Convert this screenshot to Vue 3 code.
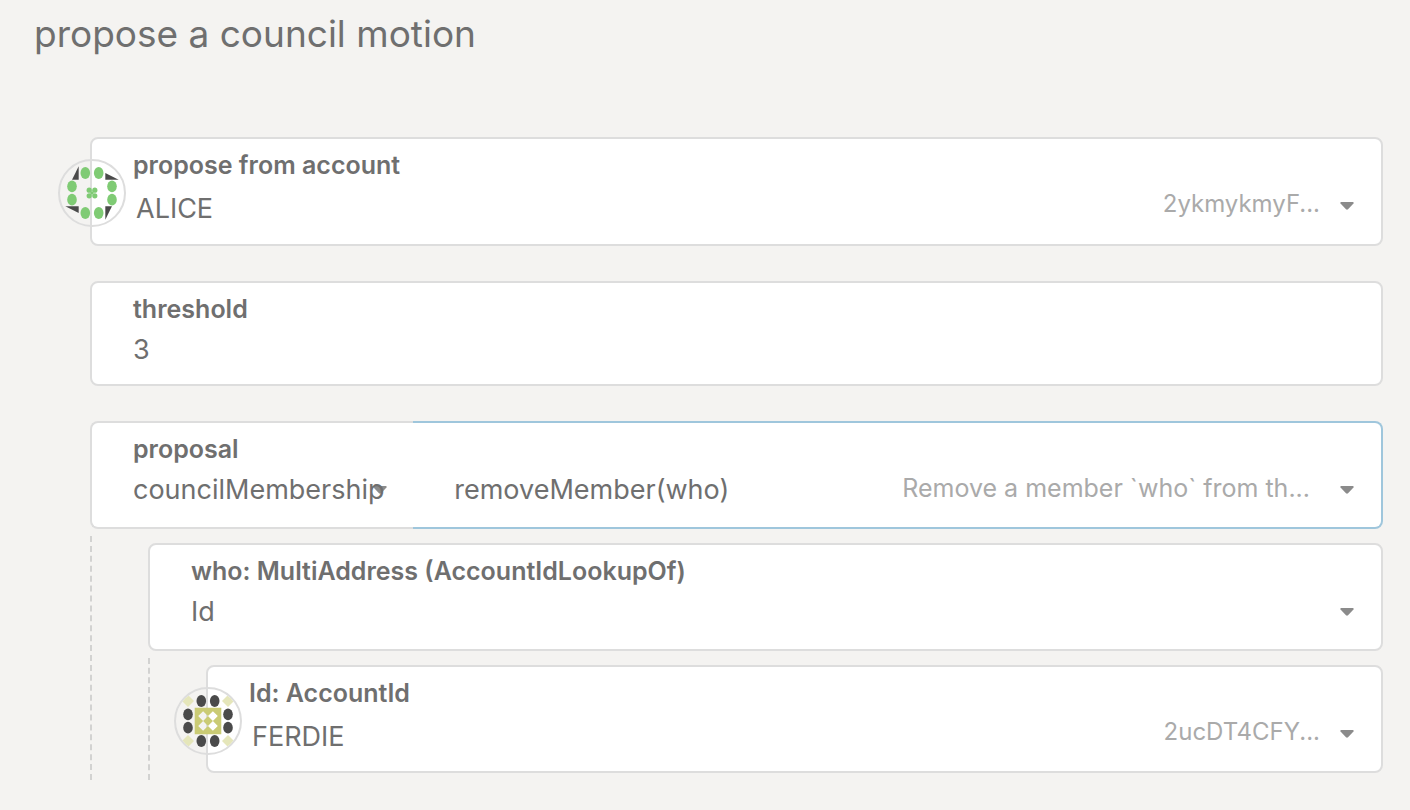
<script setup>
import { ref } from 'vue'

const account = ref('ALICE')
const threshold = ref('3')
const section = ref('councilMembership')
const method = ref('removeMember(who)')
const addressType = ref('Id')
const member = ref('FERDIE')

const dots = [
  [-6.7, -20], [6.7, -20], [-6.7, 20], [6.7, 20],
  [-20, -6.7], [-20, 6.7], [20, -6.7], [20, 6.7]
]
const turns = [0, 90, 180, 270]
const caret = 'M1 0H13Q14.5 1 13 2L8 7.3Q7 8.2 6 7.3L1 2Q-.5 1 1 0Z'
</script>

<template>
  <main class="page">
    <h1>propose a council motion</h1>

    <form class="form" @submit.prevent>
      <section class="card tall">
        <svg class="identicon" viewBox="-32 -32 64 64" aria-hidden="true">
          <ellipse v-for="([x, y], i) in dots" :key="i" :cx="x" :cy="y" rx="4.8" ry="5.9" fill="#7fcb74" />
          <path v-for="t in turns" :key="t" d="M-13.3-26.7V-13.3H-20Z" fill="#4a4a4a" :transform="`rotate(${t})`" />
          <g fill="#7fcb74">
            <circle v-for="t in turns" :key="t" cx="2.8" cy="2.8" r="2.6" :transform="`rotate(${t})`" />
            <rect x="-1.5" y="-1.5" width="3" height="3" />
          </g>
        </svg>
        <label for="account">propose from account</label>
        <div class="field named">
          <select id="account" v-model="account"><option>ALICE</option></select>
          <span class="detail">2ykmykmyF...</span>
          <svg class="caret" viewBox="0 0 14 8" aria-hidden="true"><path :d="caret" /></svg>
        </div>
      </section>

      <section class="card short">
        <label for="threshold">threshold</label>
        <div class="field">
          <input id="threshold" v-model="threshold" type="text" inputmode="numeric" />
        </div>
      </section>

      <section class="pair">
        <div class="card first">
          <label for="section">proposal</label>
          <div class="field">
            <select id="section" v-model="section"><option>councilMembership</option></select>
            <svg class="caret" viewBox="0 0 14 8" aria-hidden="true"><path :d="caret" /></svg>
          </div>
        </div>
        <div class="card second">
          <div class="field">
            <select id="method" v-model="method" aria-label="method"><option>removeMember(who)</option></select>
            <span class="detail description">Remove a member `who` from th...</span>
            <svg class="caret" viewBox="0 0 14 8" aria-hidden="true"><path :d="caret" /></svg>
          </div>
        </div>
      </section>

      <div class="nested">
        <section class="card">
          <label for="address-type">who: MultiAddress (AccountIdLookupOf)</label>
          <div class="field">
            <select id="address-type" v-model="addressType"><option>Id</option></select>
            <svg class="caret" viewBox="0 0 14 8" aria-hidden="true"><path :d="caret" /></svg>
          </div>
        </section>

        <div class="nested inner">
          <section class="card">
            <svg class="identicon" viewBox="-32 -32 64 64" aria-hidden="true">
              <path v-for="t in turns" :key="t" d="M-20-26L-14-20L-20-14L-26-20Z" fill="#e5e6ba" :transform="`rotate(${t})`" />
              <ellipse v-for="([x, y], i) in dots" :key="i" :cx="x" :cy="y" rx="4.8" ry="5.9" fill="#4a4a4a" />
              <path
                fill="#cacb74"
                fill-rule="evenodd"
                d="M-13.3-13.3H13.3V13.3H-13.3Z M-4.9-9.8L0-4.9L-4.9 0L-9.8-4.9Z M4.9-9.8L9.8-4.9L4.9 0L0-4.9Z M-4.9 0L0 4.9L-4.9 9.8L-9.8 4.9Z M4.9 0L9.8 4.9L4.9 9.8L0 4.9Z"
              />
            </svg>
            <label for="member">Id: AccountId</label>
            <div class="field named">
              <select id="member" v-model="member"><option>FERDIE</option></select>
              <span class="detail">2ucDT4CFY...</span>
              <svg class="caret" viewBox="0 0 14 8" aria-hidden="true"><path :d="caret" /></svg>
            </div>
          </section>
        </div>
      </div>
    </form>
  </main>
</template>

<style>
html,
body {
  background: #f4f3f1;
}
</style>

<style scoped>
.page {
  box-sizing: border-box;
  padding: 10px 27px 30px 34px;
  color: #6f6f6f;
  font-family: Inter, "Liberation Sans", sans-serif;
}

h1 {
  margin: 0;
  font-size: 37px;
  font-weight: 400;
  line-height: 48px;
}

.form {
  display: flex;
  flex-direction: column;
  margin-top: 79px;
  padding-left: 56px;
}

.card {
  position: relative;
  box-sizing: border-box;
  min-height: 108px;
  padding: 10px 27px 0 41px;
  background: #fff;
  border: 2px solid #dddddd;
  border-radius: 8px;
}

.form > .card {
  margin-bottom: 35px;
}

.form > .tall {
  min-height: 109px;
}

.form > .short {
  min-height: 105px;
}

label {
  display: block;
  font-size: 25px;
  font-weight: 600;
  line-height: 32px;
}

.field {
  display: flex;
  align-items: center;
  height: 48px;
}

select,
input {
  flex: 1;
  width: 100%;
  min-width: 0;
  height: 48px;
  margin: 0;
  padding: 0;
  color: inherit;
  font: inherit;
  font-size: 27px;
  background: none;
  border: 0;
  outline: 0;
  appearance: none;
}

.named select {
  padding: 6px 0 0 3px;
}

.detail {
  margin-right: 20px;
  padding-bottom: 3px;
  color: #aaaaaa;
  font-size: 24px;
  line-height: 32px;
  white-space: nowrap;
}

.description {
  margin-right: 30px;
  font-size: 25px;
}

.caret {
  flex: none;
  width: 14px;
  height: 8px;
  margin-top: 2px;
  fill: #6f6f6f;
  opacity: 0.8;
}

.pair {
  display: grid;
  grid-template-columns: minmax(0, 1fr) minmax(0, 3fr);
}

.pair .first {
  padding-right: 26px;
  border-right: 0;
  border-radius: 8px 0 0 8px;
}

.pair .second {
  padding-top: 42px;
  border-color: #9fc6dc;
  border-left: 0;
  border-radius: 0 8px 8px 0;
}

.first select {
  flex: none;
  width: calc(100% + 12px);
  margin-right: -26px;
}

.nested {
  margin-top: 7px;
  padding: 7px 0 0 56px;
  border-left: 2px dashed #d2d2d1;
}

.inner {
  padding-bottom: 7px;
}

.identicon {
  position: absolute;
  top: 20px;
  left: -34px;
  width: 64px;
  height: 64px;
  border: 2px solid #dddddd;
  border-radius: 50%;
}
</style>
